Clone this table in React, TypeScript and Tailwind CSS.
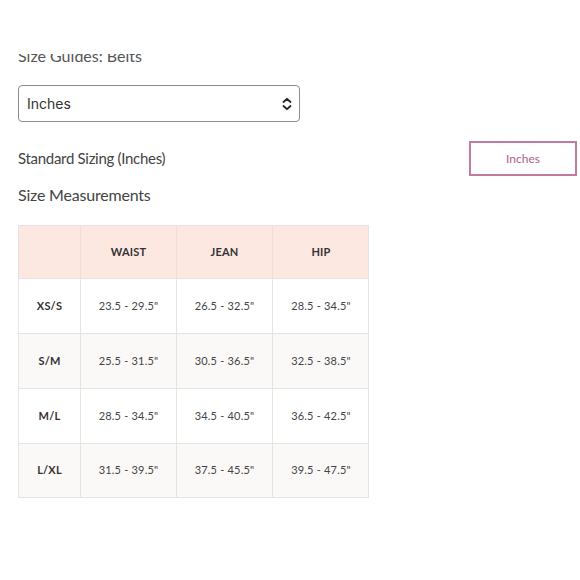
import React from "react";

const rows = [
  { size: "XS/S", waist: '23.5 - 29.5"', jean: '26.5 - 32.5"', hip: '28.5 - 34.5"', alt: false },
  { size: "S/M", waist: '25.5 - 31.5"', jean: '30.5 - 36.5"', hip: '32.5 - 38.5"', alt: true },
  { size: "M/L", waist: '28.5 - 34.5"', jean: '34.5 - 40.5"', hip: '36.5 - 42.5"', alt: false },
  { size: "L/XL", waist: '31.5 - 39.5"', jean: '37.5 - 45.5"', hip: '39.5 - 47.5"', alt: true },
];

export default function App() {
  return (
    <div className="w-[580px] h-[580px] bg-white overflow-hidden relative" style={{ fontFamily: "Lato, 'Liberation Sans', sans-serif" }}>
      <div className="pt-[54px] pl-[18px]">
        <div className="h-[8px] overflow-hidden">
          <div className="-mt-[8px] text-[16px] leading-[20px] text-[#555]">Size Guides: Belts</div>
        </div>
      </div>
      <div className="pl-[18px] mt-[23px]">
        <div className="w-[282px] h-[37px] border border-[#8c8c8c] rounded-[4px] flex items-center justify-between pl-[8px] pr-[6px]">
          <span className="text-[14px] text-[#333]" style={{ fontFamily: "Inter, 'Liberation Sans', sans-serif" }}>Inches</span>
          <svg width="12" height="14" viewBox="0 0 12 14" fill="none" stroke="#222" strokeWidth="1.8" strokeLinecap="round" strokeLinejoin="round">
            <path d="M2.5 5 L6 1.8 L9.5 5" />
            <path d="M2.5 9 L6 12.2 L9.5 9" />
          </svg>
        </div>
      </div>
      <div className="flex items-center justify-between pl-[18px] pr-[3px] mt-[19px]">
        <span className="text-[15px] text-[#444] tracking-[-0.3px]">Standard Sizing (Inches)</span>
        <div className="w-[108px] h-[35px] border-2 border-[#c27ba0] flex items-center justify-center text-[12px] text-[#b35c8c]">Inches</div>
      </div>
      <div className="pl-[18px] mt-[7px] text-[16px] text-[#444] tracking-[-0.2px]">Size Measurements</div>
      <div className="pl-[18px] mt-[18px]">
        <div className="w-[351px] border border-[#e6e3e1] text-[11px] text-[#444] tracking-[0.2px]">
          <div className="grid grid-cols-[62px_96px_96px_96px] h-[52px] bg-[#fde7e1]">
            <div className="border-r border-[#f1dcd6]"></div>
            <div className="flex items-center justify-center font-bold text-[#333] border-r border-[#f1dcd6]">WAIST</div>
            <div className="flex items-center justify-center font-bold text-[#333] border-r border-[#f1dcd6]">JEAN</div>
            <div className="flex items-center justify-center font-bold text-[#333]">HIP</div>
          </div>
          {rows.map((r, i) => (
            <div key={r.size} className={`grid grid-cols-[62px_96px_96px_96px] border-t border-[#e6e3e1] ${i === 3 ? "h-[54px]" : "h-[55px]"} ${r.alt ? "bg-[#faf9f8]" : "bg-white"}`}>
              <div className="flex items-center justify-center font-bold text-[#333] border-r border-[#e6e3e1]">{r.size}</div>
              <div className="flex items-center justify-center border-r border-[#e6e3e1]">{r.waist}</div>
              <div className="flex items-center justify-center border-r border-[#e6e3e1]">{r.jean}</div>
              <div className="flex items-center justify-center">{r.hip}</div>
            </div>
          ))}
        </div>
      </div>
    </div>
  );
}
